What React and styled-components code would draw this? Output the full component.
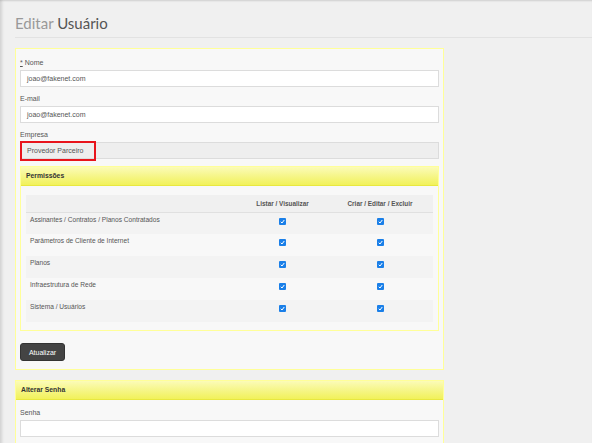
import React from "react";
import styled, { createGlobalStyle } from "styled-components";

const GlobalStyle = createGlobalStyle`
  html, body {
    margin: 0;
    padding: 0;
    background: #f0f0f0;
  }
  body {
    font-family: "Liberation Sans", Arial, sans-serif;
  }
  * {
    box-sizing: border-box;
  }
`;

const permissions = [
  "Assinantes / Contratos / Planos Contratados",
  "Parâmetros de Cliente de Internet",
  "Planos",
  "Infraestrutura de Rede",
  "Sistema / Usuários",
];

const Checkbox = () => (
  <Box>
    <svg width="5" height="5" viewBox="0 0 10 10">
      <path d="M1.5 5.5 L4 8 L8.5 2" fill="none" stroke="#fff" strokeWidth="2" />
    </svg>
  </Box>
);

const App = () => {
  return (
    <Page>
      <GlobalStyle />
      <Title>
        <span>Editar</span> Usuário
      </Title>
      <Panel>
        <PanelBody>
          <Group>
            <Label>
              <u>*</u> Nome
            </Label>
            <Input>joao@fakenet.com</Input>
          </Group>
          <Group>
            <Label>E-mail</Label>
            <Input>joao@fakenet.com</Input>
          </Group>
          <Group>
            <Label>Empresa</Label>
            <Input disabled>
              Provedor Parceiro
              <Highlight />
            </Input>
          </Group>
          <SubPanel>
            <PanelHeader>Permissões</PanelHeader>
            <SubBody>
              <Table>
                <thead>
                  <tr>
                    <Th style={{ width: 212 }}></Th>
                    <Th>Listar / Visualizar</Th>
                    <Th style={{ width: 106 }}>Criar / Editar / Excluir</Th>
                  </tr>
                </thead>
                <tbody>
                  {permissions.map((p, i) => (
                    <Row key={p} $striped={i % 2 === 0}>
                      <Td>{p}</Td>
                      <CheckCell>
                        <Checkbox />
                      </CheckCell>
                      <CheckCell>
                        <Checkbox />
                      </CheckCell>
                    </Row>
                  ))}
                </tbody>
              </Table>
            </SubBody>
          </SubPanel>
          <Button>Atualizar</Button>
        </PanelBody>
      </Panel>
      <Panel>
        <PanelHeader>Alterar Senha</PanelHeader>
        <PanelBody $top={8}>
          <Group>
            <Label>Senha</Label>
            <Input></Input>
          </Group>
        </PanelBody>
      </Panel>
    </Page>
  );
};

const Page = styled.div`
  min-height: 443px;
  padding: 0 0 0 15px;
  box-shadow: inset 3px 0 3px -1px rgba(0, 0, 0, 0.12),
    inset 0 2px 2px -1px rgba(0, 0, 0, 0.12);
`;

const Title = styled.h1`
  margin: 0 0 10px 0;
  padding: 14px 0 5px 0;
  font-family: Lato, "Liberation Sans", sans-serif;
  font-weight: 400;
  font-size: 15px;
  line-height: 18px;
  color: #555;
  border-bottom: 1px solid #e2e2e2;
  span {
    color: #999;
  }
`;

const Panel = styled.div`
  width: 429px;
  background: #f8f8f8;
  border: 1px solid #ffff99;
  margin-bottom: 10px;
`;

const PanelBody = styled.div`
  padding: ${(p) => p.$top ?? 9}px 4px 8px 4px;
`;

const Group = styled.div`
  margin-bottom: 7px;
`;

const Label = styled.div`
  font-size: 7px;
  line-height: 10px;
  color: #555;
  margin-bottom: 2px;
  u {
    text-decoration: underline;
  }
`;

const Input = styled.div`
  position: relative;
  height: 17px;
  border: 1px solid #dcdcdc;
  background: ${(p) => (p.disabled ? "#eeeeee" : "#fff")};
  padding: 0 6px;
  font-size: 7px;
  line-height: 15px;
  color: #555;
`;

const Highlight = styled.span`
  position: absolute;
  left: -1px;
  top: -2px;
  width: 76px;
  height: 20px;
  border: 2px solid #e8141c;
`;

const SubPanel = styled.div`
  border: 1px solid #ffff99;
  background: #f8f8f8;
`;

const PanelHeader = styled.div`
  height: 19px;
  padding: 0 5px;
  background: linear-gradient(#fbfbb8, #f1f15a);
  border-bottom: 1px solid #e8e840;
  font-size: 6.8px;
  font-weight: 700;
  line-height: 18px;
  color: #333;
`;

const SubBody = styled.div`
  padding: 9px 5px 8px 5px;
`;

const Table = styled.table`
  width: 100%;
  border-collapse: collapse;
  font-size: 6.6px;
  color: #555;
`;

const Th = styled.th`
  height: 17px;
  background: #f0f0f0;
  font-weight: 700;
  font-size: 6.4px;
  color: #555;
  text-align: center;
  border-bottom: 1px solid #e0e0e0;
  padding: 0;
`;

const Row = styled.tr`
  background: ${(p) => (p.$striped ? "#f3f3f3" : "#f8f8f8")};
  & + & td {
    border-top: 1px solid #e2e2e2;
  }
`;

const Td = styled.td`
  height: 22px;
  padding: 2px 4px 0 4px;
  vertical-align: top;
  line-height: 10px;
`;

const CheckCell = styled.td`
  height: 22px;
  text-align: center;
  vertical-align: top;
  padding-top: 5px;
  line-height: 0;
`;

const Box = styled.span`
  display: inline-flex;
  align-items: center;
  justify-content: center;
  width: 7px;
  height: 7px;
  border-radius: 1px;
  background: #1a7fe8;
`;

const Button = styled.button`
  margin-top: 12px;
  width: 45px;
  height: 18px;
  border: 1px solid #333;
  border-radius: 3px;
  background: #444;
  color: #fff;
  font-family: "Liberation Sans", Arial, sans-serif;
  font-size: 7px;
  padding: 0;
`;

export default App;
